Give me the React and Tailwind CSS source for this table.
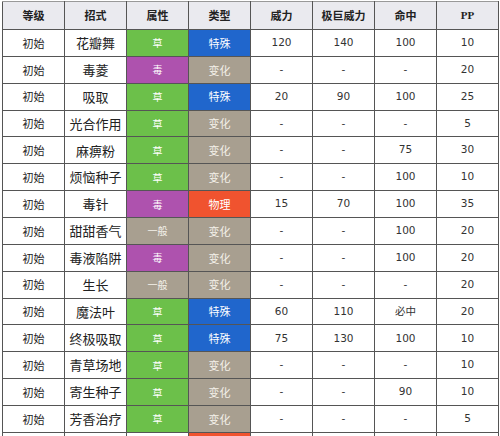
const TYPE = {
  草: "bg-[#6cc04a] text-white",
  毒: "bg-[#ae52ae] text-white",
  一般: "bg-[#a89f90] text-[#f4f1ea]",
};

const KIND = {
  特殊: "bg-[#2066cc] text-white",
  变化: "bg-[#a89f90] text-[#f4f1ea]",
  物理: "bg-[#f0532f] text-white",
};

const moves = [
  ["花瓣舞", "草", "特殊", "120", "140", "100", "10"],
  ["毒菱", "毒", "变化", "-", "-", "-", "20"],
  ["吸取", "草", "特殊", "20", "90", "100", "25"],
  ["光合作用", "草", "变化", "-", "-", "-", "5"],
  ["麻痹粉", "草", "变化", "-", "-", "75", "30"],
  ["烦恼种子", "草", "变化", "-", "-", "100", "10"],
  ["毒针", "毒", "物理", "15", "70", "100", "35"],
  ["甜甜香气", "一般", "变化", "-", "-", "100", "20"],
  ["毒液陷阱", "毒", "变化", "-", "-", "100", "20"],
  ["生长", "一般", "变化", "-", "-", "-", "20"],
  ["魔法叶", "草", "特殊", "60", "110", "必中", "20"],
  ["终极吸取", "草", "特殊", "75", "130", "100", "10"],
  ["青草场地", "草", "变化", "-", "-", "-", "10"],
  ["寄生种子", "草", "变化", "-", "-", "90", "10"],
  ["芳香治疗", "草", "变化", "-", "-", "-", "5"],
];

const headers = ["等级", "招式", "属性", "类型", "威力", "极巨威力", "命中", "PP"];

const cell = "border border-[#555] text-center align-middle p-0";

const App = () => {
  return (
    <div className="w-[500px] h-[436px] overflow-hidden bg-white pt-[1px] pl-[2px]">
      <table className="table-fixed border-collapse w-[496px] font-['Noto_Sans_CJK_SC',sans-serif]">
        <colgroup>
          {headers.map((h) => (
            <col key={h} className="w-[62px]" />
          ))}
        </colgroup>
        <thead>
          <tr className="h-[28px] bg-[#eaeaef]">
            {headers.map((h) => (
              <th
                key={h}
                className={`${cell} border-t-[#999] text-[11px] font-bold text-[#222] ${
                  h === "PP" ? "font-['Liberation_Serif',serif] text-[10px]" : ""
                }`}
              >
                {h}
              </th>
            ))}
          </tr>
        </thead>
        <tbody>
          {moves.map((m, i) => (
            <tr key={i} className="h-[26.87px]">
              <td className={`${cell} text-[11px] text-[#222]`}>初始</td>
              <td className={`${cell} text-[13px] text-[#222]`}>{m[0]}</td>
              <td className={`${cell} text-[10px] ${TYPE[m[1]]}`}>{m[1]}</td>
              <td className={`${cell} text-[11px] ${KIND[m[2]]}`}>{m[2]}</td>
              {m.slice(3).map((v, j) => (
                <td
                  key={j}
                  className={`${cell} text-[10.5px] text-[#333] font-['DejaVu_Sans','Noto_Sans_CJK_SC',sans-serif]`}
                >
                  {v}
                </td>
              ))}
            </tr>
          ))}
          {/* next row, only its top edge shows */}
          <tr className="h-[26.87px]">
            <td className={cell} />
            <td className={cell} />
            <td className={cell} />
            <td className={`${cell} bg-[#f0532f]`} />
            <td className={cell} />
            <td className={cell} />
            <td className={cell} />
            <td className={cell} />
          </tr>
        </tbody>
      </table>
    </div>
  );
};

export default App;
